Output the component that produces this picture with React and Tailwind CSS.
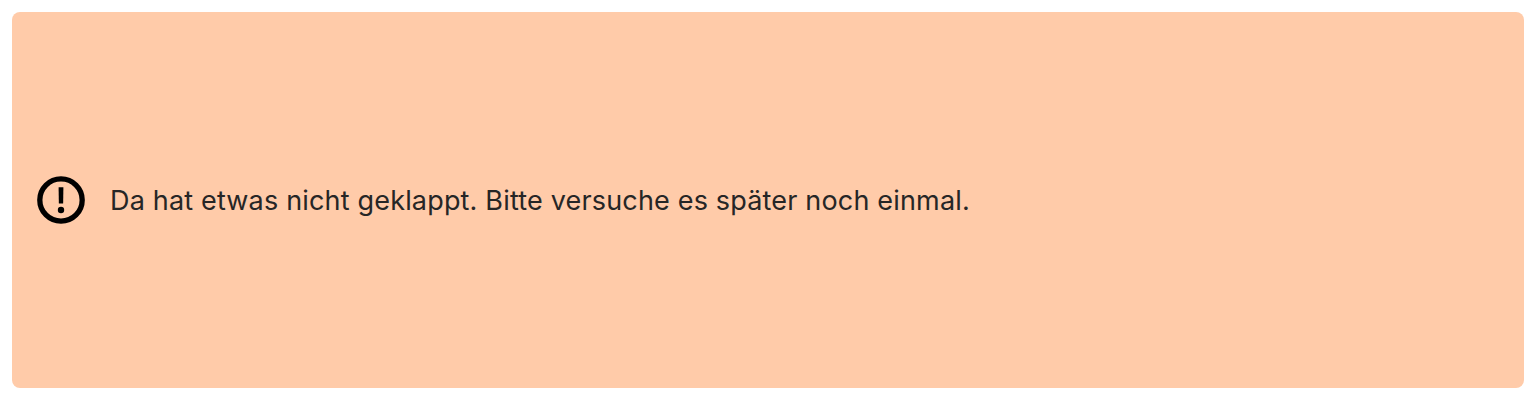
export default function App() {
  return (
    <main className="flex h-screen bg-white p-3">
      <div role="alert" className="flex flex-1 items-center gap-[25px] rounded-lg bg-[#ffcba9] pl-[25px]">
        <svg viewBox="0 0 48 48" className="size-12 shrink-0" fill="none" aria-hidden="true">
          <circle cx="24" cy="24" r="21.2" stroke="#000" strokeWidth="5.3" />
          <path d="M21.6 11.2h4.8l-.25 16.2h-4.3z" fill="#000" />
          <circle cx="24" cy="34" r="3.2" fill="#000" />
        </svg>
        <p className="pt-0.5 font-['Inter',sans-serif] text-[27px] leading-10 tracking-[0.175px] whitespace-nowrap text-[#262626]">
          Da hat etwas nicht geklappt. Bitte versuche es später noch einmal.
        </p>
      </div>
    </main>
  );
}
